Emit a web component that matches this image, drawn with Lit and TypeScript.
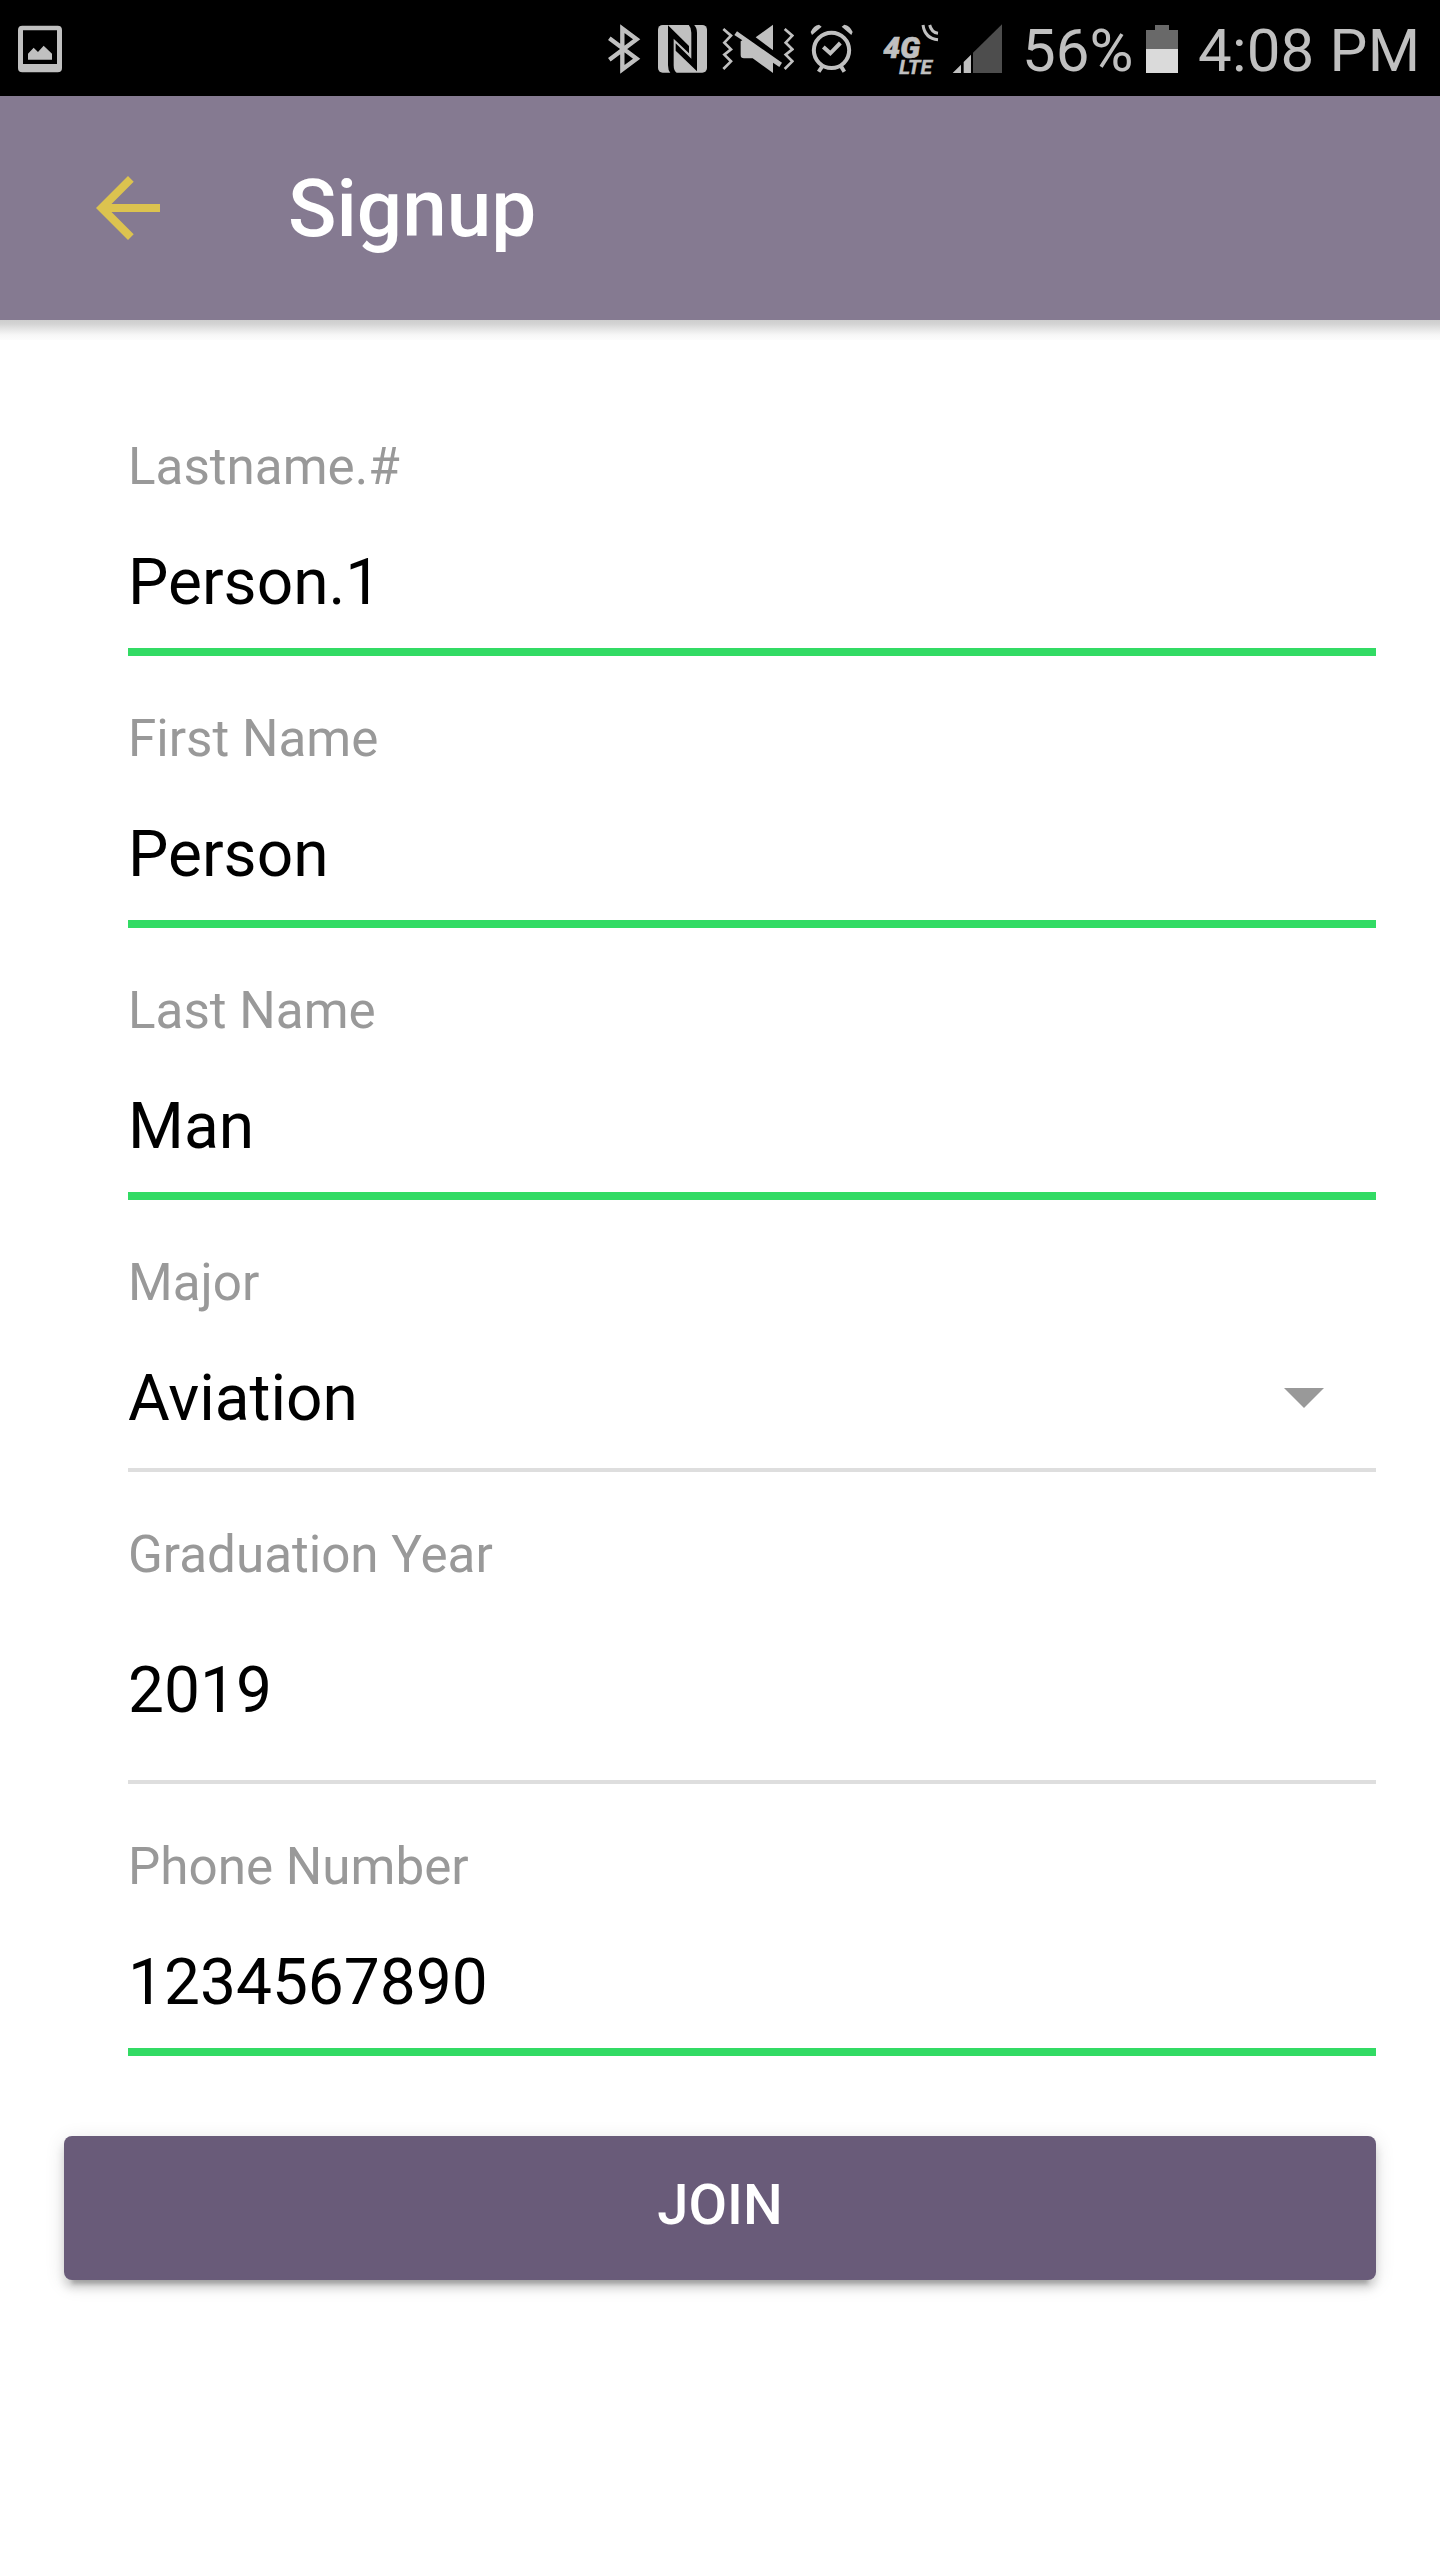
import { LitElement, html, css, svg, nothing } from "lit";
import { customElement, property } from "lit/decorators.js";

@customElement("status-bar")
class StatusBar extends LitElement {
  static styles = css`
    :host {
      display: flex;
      align-items: center;
      height: 96px;
      background: #000;
      color: #c0c0c0;
      font: 400 60px/96px Roboto, sans-serif;
      white-space: nowrap;
    }
    svg { display: block; height: 96px; flex: none; fill: #c0c0c0; }
    .gallery { width: 44px; margin-left: 18px; }
    .bluetooth { width: 33px; margin-left: auto; }
    .nfc { width: 51px; margin-left: 16px; }
    .mute { width: 72px; margin-left: 14px; }
    .alarm { width: 43px; margin-left: 16px; }
    .network { width: 56px; margin-left: 30px; }
    .signal { width: 50px; margin-left: 13px; }
    .level { width: 124px; margin-left: 20px; height: 96px; padding-top: 3px; box-sizing: border-box; }
    .battery { width: 32px; }
    .time { width: 242px; margin-left: 20px; height: 96px; padding-top: 3px; box-sizing: border-box; letter-spacing: 0.2px; }
    .line { fill: none; stroke: #c0c0c0; }
    .cut { fill: #000; }
    .dim { fill: #4d4d4d; }
    .cell { fill: #696969; }
    .charge { fill: #dadada; }
    .net { font: italic 900 88px Roboto, sans-serif; stroke: #c0c0c0; stroke-width: 2px; }
    .lte { font: italic 700 60px Roboto, sans-serif; stroke: #c0c0c0; stroke-width: 1px; }
  `;

  render() {
    return html`
      <svg class="gallery" viewBox="54 0 132 288">
        <path fill-rule="evenodd" d="M67 77H173Q186 77 186 90V204Q186 217 173 217H67Q54 217 54 204V90Q54 77 67 77ZM69 91V192H171V91Z"/>
        <path d="M84 179V161L101 143L114 156L131 137L156 161V179Z"/>
      </svg>
      <svg class="bluetooth" viewBox="54 0 99 288">
        <path class="line" stroke-width="13" d="M58 115L140 176L97 208V86L140 118L58 179"/>
      </svg>
      <svg class="nfc" viewBox="201 0 153 288">
        <rect x="204" y="75" width="147" height="143" rx="14"/>
        <path class="cut" d="M234 76L297 138V160L251 116V196Q251 212 260 219H241Q234 210 234 196Z"/>
        <path class="cut" d="M296 74H312Q321 83 321 98V214L257 152V130L304 176V98Q304 83 296 74Z"/>
      </svg>
      <svg class="mute" viewBox="396 0 216 288">
        <path class="line" stroke-width="8" d="M400 87L423 107L403 128L423 148L403 164L423 184L400 207M584 87L607 107L587 128L607 148L587 164L607 184L584 207"/>
        <path d="M549 74V151L497 112ZM441 94L576 188L568 201L549 188V219L488 175H462Q452 175 452 165V124L457 121L433 105Z"/>
      </svg>
      <svg class="alarm" viewBox="60 0 129 288">
        <circle class="line" cx="124.500" cy="151" r="53" stroke-width="12"/>
        <path class="line" stroke-width="12" d="M100 141L121 160L151 129"/>
        <path d="M62 96Q70 77 87 74L95 80L66 105ZM188 96Q180 77 163 74L155 80L184 105ZM91 197L102 202L91 218L81 212ZM159 197L148 202L158 218L168 212Z"/>
      </svg>
      <svg class="network" viewBox="279 0 168 288">
        <text class="net"><tspan x="280" y="174" textLength="110" lengthAdjust="spacingAndGlyphs">4G</tspan><tspan class="lte" x="327" y="222" textLength="99" lengthAdjust="spacingAndGlyphs">LTE</tspan></text>
        <path class="line" stroke-width="9" d="M399 75Q405 116 444 119M419 75Q425 98 444 100"/>
      </svg>
      <svg class="signal" viewBox="486 0 150 288">
        <path d="M488 219L513 194V219ZM521 186L543 164V219H521Z"/>
        <path class="dim" d="M549 158L636 73V219H549Z"/>
      </svg>
      <div class="level">56%</div>
      <svg class="battery" viewBox="408 0 96 288">
        <path class="cell" d="M435 75H477V90H504V147H408V90H435Z"/>
        <path class="charge" d="M408 147H504V219H408Z"/>
      </svg>
      <div class="time">4:08 PM</div>
    `;
  }
}

@customElement("form-field")
class FormField extends LitElement {
  @property() label = "";
  @property() value = "";
  @property() kind = "text";

  static styles = css`
    :host { display: block; font-family: Roboto, sans-serif; }
    .field { display: flex; flex-direction: column; height: 272px; box-sizing: border-box; }
    .valid { border-bottom: 8px solid #32db64; }
    .idle { border-bottom: 4px solid #dedede; }
    .tall { height: 312px; }
    .label { padding-top: 53px; font-size: 51.2px; line-height: 60px; color: #999; }
    .row { display: flex; align-items: center; justify-content: space-between; margin-top: 46px; padding-right: 52px; font-size: 64px; line-height: 76px; color: #000; }
    .value { display: block; padding-top: 2px; }
    .tall .row { margin-top: 66px; }
    .arrow { display: block; width: 40px; height: 20px; fill: #999; }
  `;

  render() {
    const state = this.kind === "text" ? "valid" : this.kind === "date" ? "idle tall" : "idle";
    return html`
      <div class="field ${state}">
        <div class="label">${this.label}</div>
        <div class="row">
          <span class="value">${this.value}</span>
          ${this.kind === "select"
            ? html`<svg class="arrow" viewBox="0 0 40 20">${svg`<path d="M0 0H40L20 20Z"/>`}</svg>`
            : nothing}
        </div>
      </div>
    `;
  }
}

@customElement("app-root")
class AppRoot extends LitElement {
  static styles = css`
    :host { display: block; width: 1440px; height: 2560px; overflow: hidden; background: #fff; font-family: Roboto, sans-serif; }
    .header { display: flex; align-items: center; height: 224px; box-sizing: border-box; padding-left: 96px; background: #857a91; }
    .back { display: block; width: 64px; height: 64px; fill: #dcc34f; }
    .title { margin: 0 0 0 128px; padding-top: 2px; font-size: 80px; line-height: 96px; font-weight: 500; color: #fff; }
    .shade { height: 20px; background: linear-gradient(#cecece 0, #d4d4d4 20%, #e8e8e8 50%, #f7f7f7 75%, #fcfcfc 100%); }
    .form { padding: 44px 64px 0 128px; }
    .actions { padding: 80px 64px 0; }
    .join {
      display: block; width: 100%; height: 144px; padding: 0 0 6px; border: 0; border-radius: 8px;
      background: #695b79; color: #fff; font: 500 56px/64px Roboto, sans-serif; text-transform: uppercase;
      box-shadow: 0 8px 8px 0 rgba(0, 0, 0, 0.14), 0 12px 4px -8px rgba(0, 0, 0, 0.2), 0 4px 20px 0 rgba(0, 0, 0, 0.12);
    }
  `;

  private fields = [
    { label: "Lastname.#", value: "Person.1", kind: "text" },
    { label: "First Name", value: "Person", kind: "text" },
    { label: "Last Name", value: "Man", kind: "text" },
    { label: "Major", value: "Aviation", kind: "select" },
    { label: "Graduation Year", value: "2019", kind: "date" },
    { label: "Phone Number", value: "1234567890", kind: "text" },
  ];

  render() {
    return html`
      <status-bar></status-bar>
      <div class="header">
        <svg class="back" viewBox="0 0 64 64"><path d="M64 28H15.500L37.700 5.700L32 0L0 32L32 64L37.700 58.300L15.500 36H64Z"/></svg>
        <h1 class="title">Signup</h1>
      </div>
      <div class="shade"></div>
      <div class="form">
        ${this.fields.map((f) => html`<form-field .label=${f.label} .value=${f.value} .kind=${f.kind}></form-field>`)}
      </div>
      <div class="actions"><button class="join">Join</button></div>
    `;
  }
}
